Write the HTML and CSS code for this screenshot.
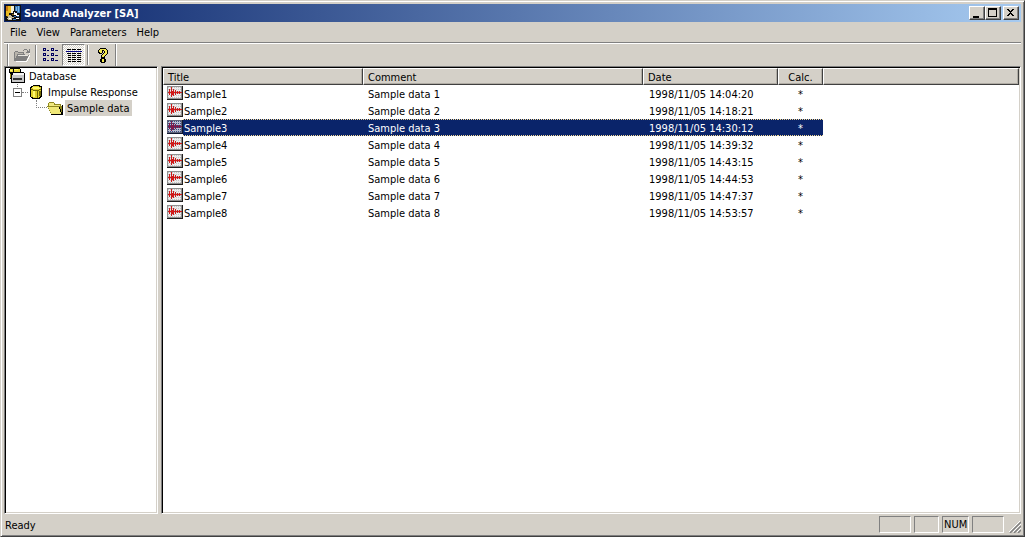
FILE: index.html
```html
<!DOCTYPE html>
<html lang="en">
<head>
<meta charset="utf-8">
<title>Sound Analyzer [SA]</title>
<link rel="stylesheet" href="styles.css">
</head>
<body>
<svg class="defs" aria-hidden="true">
  <defs>
    <symbol id="wave" viewBox="0 0 16 16">
      <path fill="#909090" d="M0 1h15v13H0z"/><path fill="#ececec" d="M1 2h13v11H1z"/>
      <path stroke="#c4c4c4" stroke-dasharray="1 1" d="M1 2.500h13M1 4.500h13M1 6.500h13M1 8.500h13M1 10.500h13M1 12.500h13"/>
      <path fill="#202020" d="M15 1h1v14H0v-1h15z"/>
      <path fill="#d01818" d="M1 7h14v1H1zM2 4h1v6H2zM4 2h1v10H4zM5 6h1v4H5zM6 4h1v7H6zM8 5h1v5H8zM10 6h1v3h-1zM12 6h1v3h-1z"/>
    </symbol>
    <symbol id="wave-selected" viewBox="0 0 16 16">
      <path fill="#606478" d="M0 1h15v13H0z"/><path fill="#b8bccc" d="M1 2h13v11H1z"/>
      <path stroke="#3a4c84" stroke-dasharray="1 1" d="M1 2.500h13M1 4.500h13M1 6.500h13M1 8.500h13M1 10.500h13M1 12.500h13"/>
      <path fill="#101830" d="M15 1h1v14H0v-1h15z"/>
      <path fill="#801848" d="M1 7h14v1H1zM2 4h1v6H2zM4 2h1v10H4zM5 6h1v4H5zM6 4h1v7H6zM8 5h1v5H8zM10 6h1v3h-1zM12 6h1v3h-1z"/>
    </symbol>
  </defs>
</svg>
<div class="window">
  <header class="titlebar">
    <svg class="app-icon" viewBox="0 0 16 16" aria-hidden="true">
      <path fill="#101010" d="M0 0h16v16H0z"/><path fill="#e8b820" d="M1 1h5v7H4v3H1z"/><path fill="#c87810" d="M1 1h2v5H1z"/>
      <path fill="#f4f0d8" d="M6 1h3v5H8v2H6z"/><path fill="#3978b8" d="M10 1h5v7h-3V6h-2z"/><path fill="#80b8e8" d="M11 2h1v4h-1zM13 1h1v6h-1z"/>
      <path fill="#c8c0a0" d="M2 13h1v-2h1v-1h2v1h1v1h2v1H7v2H3v-1H2z"/><path fill="#fff" d="M9 7h1v1h2v2h2v1h-3v-1H9zM4 13h2v1H4zM11 13h3v1h-3z"/>
      <path fill="#3978b8" d="M9 11h2v1H9zM12 11h2v1h-2zM8 14h3v1H8z"/><path fill="#8a6910" d="M7 9h2v1H7zM2 11h1v1H2z"/>
    </svg>
    <h1 class="title">Sound Analyzer [SA]</h1>
    <button class="caption-button" type="button" aria-label="Minimize"><svg viewBox="0 0 13 12"><path d="M3 9h6v2H3z"/></svg></button>
    <button class="caption-button" type="button" aria-label="Maximize"><svg viewBox="0 0 13 12"><path fill-rule="evenodd" d="M2 1h9v9H2zM3 3v6h7V3z"/></svg></button>
    <button class="caption-button close" type="button" aria-label="Close"><svg viewBox="0 0 13 12"><path d="M3 2h2v1h1v1h1V3h1V2h2v1H9v1H8v1H7v1h1v1h1v1h1v1H8V8H7V7H6v1H5v1H3V8h1V7h1V6h1V5H5V4H4V3H3z"/></svg></button>
  </header>
  <nav class="menubar" aria-label="Menu">
    <button type="button">File</button><button type="button">View</button><button type="button">Parameters</button><button type="button">Help</button>
  </nav>
  <div class="toolbar" role="toolbar" aria-label="Tools">
    <div class="tool-group">
      <button class="tool" type="button" aria-label="Open" disabled><svg viewBox="0 0 16 16">
        <path fill="#fff" d="M2 14h11v1H2zM15 8h1v2h-1v2h-1v2h-1v-2h1v-2h1zM15 2h1v5h-1z"/>
        <path fill="#808080" d="M10 2h3v1h-3zM9 3h1v1H9zM13 3h1v1h1V2h1v4h-4V5h1V4zM1 4h3v1h6v2h1v1h4v1h-1v2h-1v2h-1v1H0V5h1z"/>
        <path fill="#b8b4ac" d="M1 5h3v1h5v1H3v2H2v2H1z"/><path fill="#e8e6e0" d="M4 8h10v1H4z"/>
      </svg></button>
      <span class="separator"></span>
      <button class="tool" type="button" aria-label="List view"><svg viewBox="0 0 16 16">
        <path fill="#000060" fill-rule="evenodd" d="M0 1h3v3H0zM1 2v1h1V2zM0 6h3v3H0zM1 7v1h1V7zM0 11h3v3H0zM1 12v1h1v-1zM8 1h3v3H8zM9 2v1h1V2zM8 6h3v3H8zM9 7v1h1V7zM8 11h3v3H8zM9 12v1h1v-1zM4 3h2v1H4zM12 3h3v1h-3zM4 8h2v1H4zM12 8h3v1h-3zM4 13h2v1H4zM12 13h3v1h-3z"/>
      </svg></button>
      <button class="tool pressed" type="button" aria-label="Details view" aria-pressed="true"><svg viewBox="0 0 16 16">
        <path fill="#000" d="M1 2h4v1H1zM6 2h4v1H6zM11 2h4v1h-4zM1 6h4v1H1zM6 6h4v1H6zM11 6h4v1h-4zM2 8h3v1H2zM6 8h4v1H6zM11 8h4v1h-4zM2 10h3v1H2zM6 10h4v1H6zM11 10h4v1h-4zM2 12h3v1H2zM6 12h4v1H6zM11 12h4v1h-4zM2 14h3v1H2zM6 14h4v1H6zM11 14h4v1h-4z"/><path fill="#000080" d="M0 4h16v1H0z"/>
      </svg></button>
      <span class="separator"></span>
      <button class="tool" type="button" aria-label="About"><svg viewBox="0 0 16 16">
        <path fill="#000" d="M5 1h6v1h1v1h1v4h-1v1h-1v1h-1v2H6V8h1V7h1V6h1V4H8v2H7v1H4V6H3V3h1V2h1zM6 11h4v1h1v3h-1v1H6v-1H5v-3h1z"/>
        <path fill="#f4e850" d="M5 2h6v1h1v4h-1v1h-1v1H9v1H7V8h1V7h1V6h1V4H9V3H7v3H5V5H4V3h1zM7 12h2v3H7z"/>
      </svg></button>
    </div>
  </div>
  <main class="panes">
    <aside class="pane tree-pane">
      <ul class="tree">
        <li class="node"><svg class="icon" viewBox="0 0 16 16"><path d="M1 0h10v1h1v3h3v1h1v10H2v-4H1V5H0V1h1z"/><path fill="#e8d838" d="M1 1h3v3H1zM5 1h6v3H5z"/><path fill="#fff870" d="M5 1h4v1H5zM1 2h2v1H1z"/><path fill="#a09018" d="M1 6h1v4H1z"/><path fill="#f4f4f4" d="M4 5h11v2H4z"/><path fill="#c8c8c8" d="M3 7h12v7H3z"/><path fill="#303030" d="M4 10h9v2H4z"/></svg><span class="node-label">Database</span></li>
        <li class="node level-one"><button class="expander" type="button" aria-label="Collapse Impulse Response"></button><span class="branch"></span><svg class="icon" viewBox="0 0 16 16"><path d="M5 1h7v1h2v11h-1v1h-1v1H4v-1H3v-1H2V3h1V2h2z"/><path fill="#e0d028" d="M5 2h6v1h2v9h-1v1h-1v1H5v-1H3V4h1V3h1z"/><path fill="#fff870" d="M5 3h6v1h1v1H5V4H4V3zM5 7h2v6H5z"/><path fill="#706808" d="M3 5h2v1h6V5h2v1h-2v1H5V6H3zM9 7h1v7H9zM11 7h2v5h-2z"/></svg><span class="node-label">Impulse Response</span></li>
        <li class="node level-two"><span class="elbow"></span><svg class="icon" viewBox="0 0 16 16"><path fill="#908820" d="M1 3h1V2h5v1h1v1h6v2h1v8H4v-1H3v-2H2V9H1z"/><path fill="#f0e880" d="M2 3h5v2h6v1H2z"/><path fill="#908820" d="M0 6h12v1H0z"/><path fill="#f0e878" d="M1 7h11v2h1v3h1v2H4v-2H3v-2H2V8H1z"/><path d="M15 5h1v10H4v-1h11zM12 7h1v2h-1zM13 9h1v3h-1zM14 12h1v2h-1z"/></svg><span class="node-label selected">Sample data</span></li>
      </ul>
    </aside>
    <section class="pane list-pane">
      <table class="list">
        <colgroup><col class="col-title"><col class="col-comment"><col class="col-date"><col class="col-calc"><col></colgroup>
        <thead><tr><th>Title</th><th>Comment</th><th>Date</th><th class="calc">Calc.</th><th aria-label="Empty"></th></tr></thead>
        <tbody>
          <tr><td class="name"><div class="item"><svg class="icon"><use href="#wave"/></svg><span>Sample1</span></div></td><td>Sample data 1</td><td>1998/11/05 14:04:20</td><td class="calc">*</td><td></td></tr>
          <tr><td class="name"><div class="item"><svg class="icon"><use href="#wave"/></svg><span>Sample2</span></div></td><td>Sample data 2</td><td>1998/11/05 14:18:21</td><td class="calc">*</td><td></td></tr>
          <tr class="current" aria-selected="true"><td class="name"><div class="item"><svg class="icon"><use href="#wave-selected"/></svg><span>Sample3</span></div></td><td>Sample data 3</td><td>1998/11/05 14:30:12</td><td class="calc">*</td><td></td></tr>
          <tr><td class="name"><div class="item"><svg class="icon"><use href="#wave"/></svg><span>Sample4</span></div></td><td>Sample data 4</td><td>1998/11/05 14:39:32</td><td class="calc">*</td><td></td></tr>
          <tr><td class="name"><div class="item"><svg class="icon"><use href="#wave"/></svg><span>Sample5</span></div></td><td>Sample data 5</td><td>1998/11/05 14:43:15</td><td class="calc">*</td><td></td></tr>
          <tr><td class="name"><div class="item"><svg class="icon"><use href="#wave"/></svg><span>Sample6</span></div></td><td>Sample data 6</td><td>1998/11/05 14:44:53</td><td class="calc">*</td><td></td></tr>
          <tr><td class="name"><div class="item"><svg class="icon"><use href="#wave"/></svg><span>Sample7</span></div></td><td>Sample data 7</td><td>1998/11/05 14:47:37</td><td class="calc">*</td><td></td></tr>
          <tr><td class="name"><div class="item"><svg class="icon"><use href="#wave"/></svg><span>Sample8</span></div></td><td>Sample data 8</td><td>1998/11/05 14:53:57</td><td class="calc">*</td><td></td></tr>
        </tbody>
      </table>
    </section>
  </main>
  <footer class="statusbar">
    <span class="status-text">Ready</span>
    <span class="indicator wide"></span><span class="indicator narrow"></span><span class="indicator">NUM</span><span class="indicator wide"></span>
    <svg class="grip" viewBox="0 0 12 12" aria-hidden="true"><path stroke="#808080" stroke-width="1.5" d="M1 12L12 1M5 12l7-7M9 12l3-3"/><path stroke="#fff" d="M0 11L11 0M4 11l8-8M8 11l4-4"/></svg>
  </footer>
</div>
</body>
</html>
```
FILE: styles.css
```css
* { box-sizing: border-box; }
body {
  margin: 0;
  background: #d4d0c8;
  color: #000;
  font: 11px/16px Tahoma, "DejaVu Sans Condensed", "Noto Sans", sans-serif;
}
button { margin: 0; padding: 0; border: 0; background: none; color: inherit; font: inherit; }
svg { display: block; flex: none; shape-rendering: crispEdges; }
.defs { position: absolute; width: 0; height: 0; }

.window {
  display: flex;
  flex-direction: column;
  min-height: 100vh;
  padding: 2px;
  border: 1px solid;
  border-color: #d4d0c8 #404040 #404040 #d4d0c8;
  box-shadow: inset 1px 1px #fff, inset -1px -1px #808080;
}
.titlebar {
  display: flex;
  align-items: center;
  height: 18px;
  margin: 1px 1px 0;
  padding: 0 2px 0 1px;
  background: linear-gradient(to right, #0a246a, #a6caf0);
  color: #fff;
}
.app-icon { width: 16px; height: 16px; }
.title { flex: 1; margin: 0; padding: 2px 0 0 3px; font-size: 11px; line-height: 16px; }
.caption-button {
  width: 16px;
  height: 14px;
  background: #d4d0c8;
  border: 1px solid;
  border-color: #fff #404040 #404040 #fff;
  box-shadow: inset -1px -1px #808080;
}
.caption-button svg { width: 13px; height: 12px; }
.close { margin-left: 2px; }

.menubar { display: flex; height: 20px; padding: 0 2px; }
.menubar button { padding: 2px 5px 0; line-height: 18px; }

.toolbar {
  display: flex;
  height: 24px;
  margin: 0 1px;
  border-top: 1px solid #808080;
  box-shadow: inset 0 1px #fff;
}
.tool-group {
  display: flex;
  align-items: center;
  margin-top: 1px;
  margin-left: 3px;
  padding: 0 1px 0 2px;
  border-left: 1px solid #808080;
  border-right: 1px solid #808080;
  box-shadow: inset 1px 0 #fff, 1px 0 #fff;
}
.tool { display: grid; place-items: center; width: 23px; height: 22px; border: 1px solid transparent; }
.tool svg { width: 16px; height: 16px; }
.pressed {
  border-color: #808080 #fff #fff #808080;
  background: repeating-conic-gradient(#fff 0 25%, #d4d0c8 0 50%) 0 0 / 2px 2px;
}
.separator { width: 2px; height: 20px; margin: 0 2px; border-left: 1px solid #808080; border-right: 1px solid #fff; }

.panes {
  display: grid;
  flex: 1;
  grid-template-columns: 154px minmax(0, 1fr);
  gap: 3px;
  margin: 0 1px;
}
.pane {
  padding: 1px;
  border: 1px solid;
  border-color: #808080 #fff #fff #808080;
  background: #fff;
  box-shadow: inset 1px 1px #000, inset -1px -1px #d4d0c8;
}
.tree { margin: 0; padding: 0 3px; list-style: none; }
.node { display: flex; align-items: center; height: 16px; }
.icon { width: 16px; height: 16px; }
.node-label { margin-left: 2px; padding: 2px 2px 0; line-height: 14px; white-space: nowrap; }
.selected { background: #d4d0c8; }
.level-one {
  padding-left: 4px;
  background: repeating-linear-gradient(#808080 0 1px, #fff 1px 2px) 8px 0 / 1px 4px no-repeat;
}
.level-two { padding-left: 27px; }
.expander { width: 9px; height: 9px; border: 1px solid #808080; background: linear-gradient(#000, #000) center / 5px 1px no-repeat #fff; }
.branch { width: 6px; border-top: 1px dotted #808080; }
.elbow { width: 11px; height: 8px; align-self: flex-start; border-left: 1px dotted #808080; border-bottom: 1px dotted #808080; }

.list { width: 100%; border-collapse: separate; border-spacing: 0; table-layout: fixed; }
.col-title { width: 200px; }
.col-comment { width: 280px; }
.col-date { width: 135px; }
.col-calc { width: 45px; }
.list th {
  height: 17px;
  padding: 2px 4px 0;
  border: 1px solid;
  border-color: #fff #404040 #404040 #fff;
  background: #d4d0c8;
  box-shadow: inset -1px -1px #b0aca4;
  font-weight: normal;
  line-height: 13px;
  text-align: left;
}
.list td { height: 17px; padding: 2px 5px 0; line-height: 15px; white-space: nowrap; }
.list td:nth-child(3) { padding-left: 6px; }
.list .name { padding: 0 0 0 4px; }
.list .calc { text-align: center; }
.item { display: flex; height: 17px; }
.item span { flex: 1; padding: 2px 0 0 1px; }
.current .item span, .current td:nth-child(n+2):nth-child(-n+4) {
  background:
    repeating-linear-gradient(to right, #f5db95 0 1px, #0a246a 1px 2px) top / 100% 1px no-repeat,
    repeating-linear-gradient(to right, #f5db95 0 1px, #0a246a 1px 2px) bottom / 100% 1px no-repeat,
    #0a246a;
  color: #fff;
}

.statusbar { display: flex; gap: 3px; height: 20px; padding: 2px 1px 1px; }
.status-text { flex: 1; padding: 2px 0 0 1px; line-height: 15px; }
.indicator {
  width: 27px;
  height: 17px;
  padding: 1px 1px 0;
  border: 1px solid;
  border-color: #808080 #fff #fff #808080;
  line-height: 14px;
}
.wide { width: 32px; }
.narrow { width: 25px; }
.grip { width: 12px; height: 12px; margin-left: 2px; align-self: flex-end; shape-rendering: auto; }
```
